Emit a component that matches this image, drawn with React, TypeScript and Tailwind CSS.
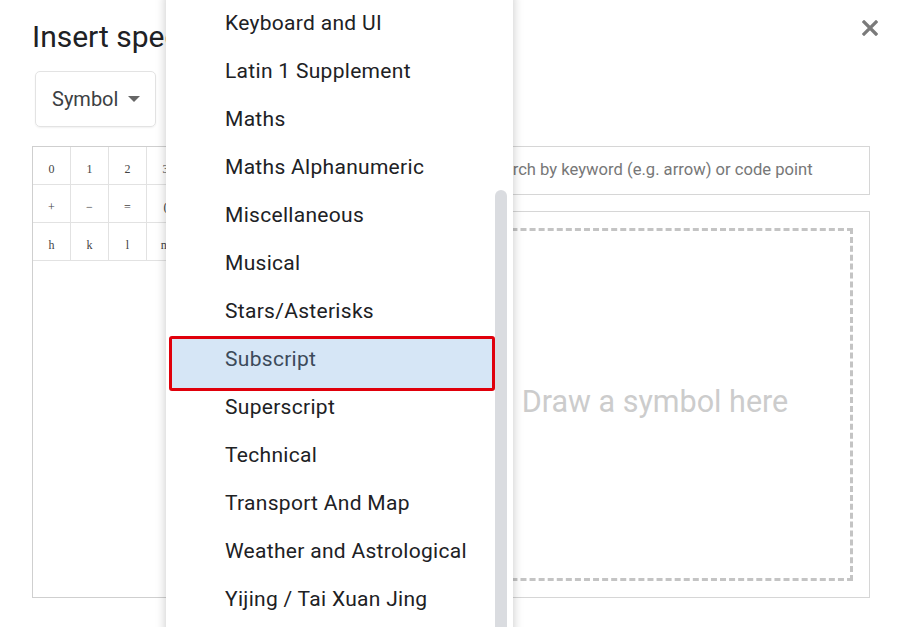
import React from "react";

const menuItems = [
  "Keyboard and UI",
  "Latin 1 Supplement",
  "Maths",
  "Maths Alphanumeric",
  "Miscellaneous",
  "Musical",
  "Stars/Asterisks",
  "Subscript",
  "Superscript",
  "Technical",
  "Transport And Map",
  "Weather and Astrological",
  "Yijing / Tai Xuan Jing",
];

const gridRows = [
  ["0", "1", "2", "3", "4", "5", "6", "7", "8", "9"],
  ["+", "−", "=", "(", ")", "a", "e", "o", "x", "ə"],
  ["h", "k", "l", "m", "n", "p", "s", "t", "", ""],
];

export default function App() {
  return (
    <div
      className="relative w-[903px] h-[627px] overflow-hidden bg-white"
      style={{ fontFamily: "Roboto, 'Noto Sans', sans-serif" }}
    >
      <div className="flex flex-col pl-[32px] pr-[33px] pt-[19px]">
        <div className="flex items-start justify-between">
          <h1 className="text-[30px] leading-[36px] text-[#202124] font-normal">
            Insert special characters
          </h1>
          <button className="-mr-[12px] -mt-[3px] flex h-[24px] w-[24px] items-center justify-center">
            <svg width="16" height="16" viewBox="0 0 16 16">
              <path
                d="M2 2 L14 14 M14 2 L2 14"
                stroke="#7a7a7a"
                strokeWidth="3.2"
                strokeLinecap="square"
              />
            </svg>
          </button>
        </div>

        <div className="mt-[16px] flex">
          <div className="ml-[3px] flex h-[56px] w-[121px] items-center rounded-[5px] border border-[#e3e3e3] pl-[16px] shadow-[0_1px_2px_rgba(0,0,0,0.06)]">
            <span className="text-[20px] text-[#3c4043]">Symbol</span>
            <svg className="ml-[10px]" width="12" height="6" viewBox="0 0 12 6">
              <path d="M0 0 L12 0 L6 6 Z" fill="#666" />
            </svg>
          </div>
        </div>

        <div className="mt-[19px] flex gap-[16px]">
          <div className="h-[452px] w-[392px] border border-[#cfcfcf] bg-white">
            <div className="flex flex-col">
              {gridRows.map((row, ri) => (
                <div key={ri} className="flex">
                  {row.map((c, ci) => (
                    <div
                      key={ci}
                      className="flex h-[38px] w-[38px] items-center justify-center border-b border-r border-[#e2e2e2] pt-[6px] text-[12px] text-[#444]"
                      style={{ fontFamily: "'Liberation Serif', 'DejaVu Serif', serif" }}
                    >
                      {c}
                    </div>
                  ))}
                </div>
              ))}
            </div>
          </div>

          <div className="flex w-[430px] flex-col gap-[16px]">
            <div className="flex h-[49px] items-center border border-[#d6d6d6] pl-[44px]">
              <span className="text-[16.6px] text-[#777] -mt-[1px]">
                Search by keyword (e.g. arrow) or code point
              </span>
            </div>
            <div className="h-[387px] border border-[#d6d6d6] p-[16px]">
              <div className="flex h-full items-center justify-center border-[3px] border-dashed border-[#c4c4c4]">
                <span className="mb-[6px] text-[30.5px] text-[#cccccc]">Draw a symbol here</span>
              </div>
            </div>
          </div>
        </div>
      </div>

      {/* Dropdown menu overlay */}
      <div className="absolute left-[166px] top-[-10px] bottom-[-10px] w-[347px] bg-white shadow-[0_2px_10px_rgba(0,0,0,0.22)]">
        <div className="flex flex-col pt-[10px] pr-[18px]">
          {menuItems.map((item) => {
            const active = item === "Subscript";
            return (
              <div key={item} className="relative flex h-[48px] items-center">
                {active && (
                  <div className="absolute left-[3px] right-0 top-0 bottom-[-7px] rounded-[3px] border-[3px] border-[#e0000b] bg-[#d6e6f6]" />
                )}
                <span
                  className={
                    "relative pl-[59px] text-[21px] tracking-[0.3px] " +
                    (active ? "text-[#3c4a5a]" : "text-[#202124]")
                  }
                >
                  {item}
                </span>
              </div>
            );
          })}
        </div>
        <div className="absolute left-[329px] top-[200px] bottom-0 w-[12px] rounded-t-full bg-[#dadce0]" />
      </div>
    </div>
  );
}
